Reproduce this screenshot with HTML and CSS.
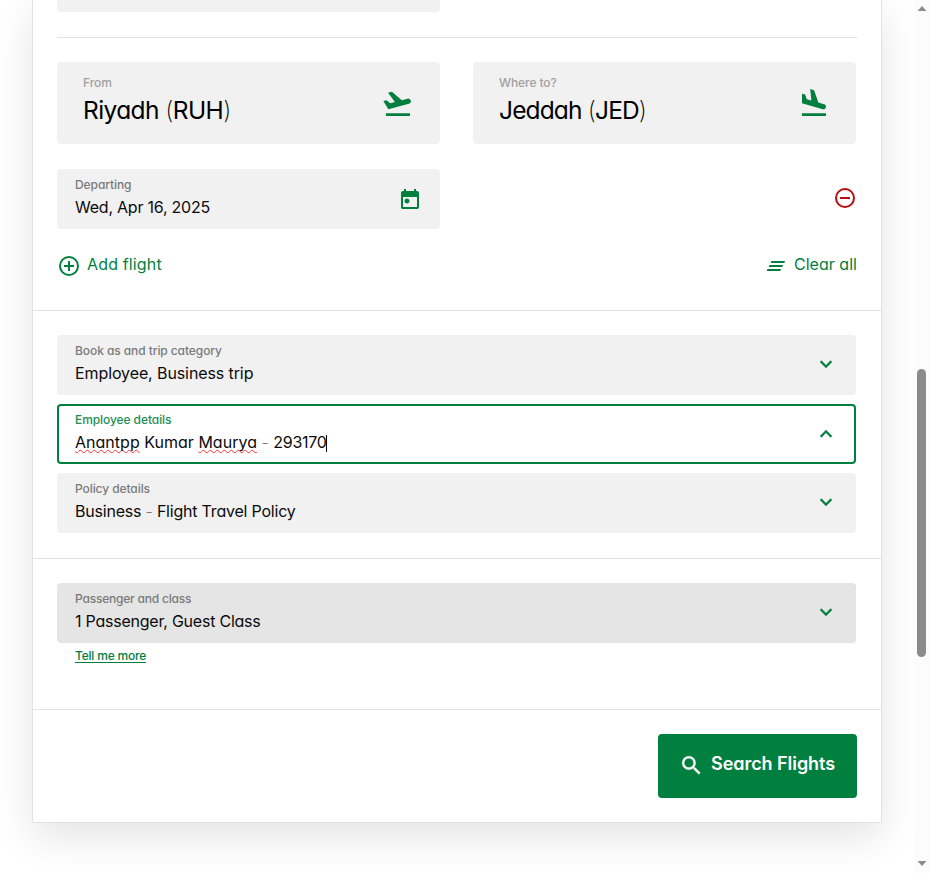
FILE: index.html
```html
<!DOCTYPE html>
<html lang="en">
<head>
<meta charset="utf-8">
<title>Search Flights</title>
<link rel="stylesheet" href="styles.css">
</head>
<body>
<div class="viewport">
  <main class="page">
    <form class="card">
      <section class="section itinerary">
        <div class="field-stub"></div>
        <hr class="rule">
        <div class="row">
          <div class="airport">
            <div class="airport-text"><span class="label faint">From</span><span class="city">Riyadh <i>(</i>RUH<i>)</i></span></div>
            <svg class="icon-lg" viewBox="0 -960 960 960"><path d="M120-120v-80h720v80H120Zm70-200L40-570l96-26 112 94 140-37-207-276 116-31 299 251 170-46q32-9 60.5 7.5T864-585q9 32-7.5 60.5T808-487L190-320Z"/></svg>
          </div>
          <div class="airport">
            <div class="airport-text"><span class="label faint">Where to?</span><span class="city city-to">Jeddah <i>(</i>JED<i>)</i></span></div>
            <svg class="icon-lg" viewBox="0 -960 960 960"><path d="M120-120v-80h720v80H120Zm622-202L120-499v-291l96 27 48 139 138 39-35-343 115 34 128 369 172 49q25 8 41.5 29t16.5 48q0 35-28.5 61.5T742-322Z"/></svg>
          </div>
        </div>
        <div class="row dates">
          <div class="field date">
            <div class="field-text"><span class="label">Departing</span><span class="value tight">Wed, Apr 16, 2025</span></div>
            <svg class="icon" viewBox="0 -960 960 960"><path d="M360-300q-42 0-71-29t-29-71q0-42 29-71t71-29q42 0 71 29t29 71q0 42-29 71t-71 29ZM200-80q-33 0-56.5-23.5T120-160v-560q0-33 23.5-56.5T200-800h40v-80h80v80h320v-80h80v80h40q33 0 56.5 23.5T840-720v560q0 33-23.5 56.5T760-80H200Zm0-80h560v-400H200v400Z"/></svg>
          </div>
          <svg class="icon remove" viewBox="0 0 24 24"><circle cx="12" cy="12" r="9"/><path d="M7 12h10"/></svg>
        </div>
        <div class="actions">
          <a class="action"><svg class="icon outline" viewBox="0 0 24 24"><circle cx="12" cy="12" r="9"/><path d="M7 12h10M12 7v10"/></svg><span class="action-text add">Add flight</span></a>
          <a class="action"><svg class="icon" viewBox="0 0 24 24"><path d="M7.4 7H21l-.7 2H6.7zM5.4 11H19l-.7 2H4.7zM3.4 15H17l-.7 2H2.7z"/></svg><span class="action-text">Clear all</span></a>
        </div>
      </section>
      <section class="section stack">
        <div class="field">
          <div class="field-text"><span class="label">Book as and trip category</span><span class="value">Employee, Business trip</span></div>
          <svg class="icon chevron" viewBox="0 0 24 24"><path d="M16.59 8.59 12 13.17 7.41 8.59 6 10l6 6 6-6z"/></svg>
        </div>
        <div class="field active">
          <div class="field-text"><span class="label">Employee details</span><span class="value name"><span class="misspelt">Anantpp</span> Kumar <span class="misspelt">Maurya</span> <i>-</i> <span class="number">293170</span><span class="caret"></span></span></div>
          <svg class="icon chevron" viewBox="0 0 24 24"><path d="m12 8-6 6 1.41 1.41L12 10.83l4.59 4.58L18 14z"/></svg>
        </div>
        <div class="field">
          <div class="field-text"><span class="label">Policy details</span><span class="value policy">Business <i>-</i> Flight Travel Policy</span></div>
          <svg class="icon chevron" viewBox="0 0 24 24"><path d="M16.59 8.59 12 13.17 7.41 8.59 6 10l6 6 6-6z"/></svg>
        </div>
      </section>
      <section class="section passengers">
        <div class="field hovered">
          <div class="field-text"><span class="label snug">Passenger and class</span><span class="value tight">1 Passenger, Guest Class</span></div>
          <svg class="icon chevron" viewBox="0 0 24 24"><path d="M16.59 8.59 12 13.17 7.41 8.59 6 10l6 6 6-6z"/></svg>
        </div>
        <a class="more">Tell me more</a>
      </section>
      <section class="section submit">
        <button class="search" type="button"><svg class="icon" viewBox="0 0 24 24"><path d="M15.5 14h-.79l-.28-.27A6.47 6.47 0 0 0 16 9.5 6.5 6.5 0 1 0 9.5 16c1.61 0 3.09-.59 4.23-1.57l.27.28v.79l5 4.99L20.49 19zm-6 0a4.5 4.5 0 1 1 0-9 4.5 4.5 0 0 1 0 9z"/></svg><span>Search Flights</span></button>
      </section>
    </form>
  </main>
  <aside class="scrollbar">
    <svg class="arrow" viewBox="0 0 10 5"><path d="M5 0l4.5 5h-9z"/></svg>
    <div class="thumb"></div>
    <svg class="arrow" viewBox="0 0 10 5"><path d="M.5 0h9L5 5z"/></svg>
  </aside>
</div>
</body>
</html>
```

FILE: styles.css
```css
* { box-sizing: border-box; }
body {
  margin: 0;
  font-family: Inter, "Liberation Sans", sans-serif;
  font-feature-settings: "cv11" 1;
  color: #0b0b0b;
  background: #fff;
}
.viewport { display: flex; height: 873px; overflow: hidden; }
.page { width: 914px; padding-left: 32px; overflow: hidden; }
.card {
  width: 850px;
  height: 823px;
  background: #fff;
  border: 1px solid #e1e1e1;
  border-top: 0;
  border-radius: 0 0 2px 2px;
  box-shadow: 0 14px 40px rgba(0, 0, 0, .11);
}
.section { padding: 24px 24px 25px; border-bottom: 1px solid #e1e1e1; }
.itinerary { height: 311px; padding-top: 0; }
.field-stub { width: 383px; height: 12px; background: #f1f1f1; border-radius: 0 0 4px 4px; }
.rule { height: 1px; margin: 25px 0 24px; border: 0; background: #e1e1e1; }
.row { display: flex; gap: 33px; }
.airport {
  display: flex;
  justify-content: space-between;
  width: 383px;
  height: 82px;
  padding: 14px 26px 0;
  background: #f1f1f1;
  border-radius: 4px;
}
.airport-text, .field-text { display: flex; flex-direction: column; }
.icon, .icon-lg { flex: none; width: 24px; height: 24px; fill: #007f3e; }
.icon-lg { width: 32px; height: 32px; margin-top: 12px; }
.label { font-size: 12px; line-height: 14px; letter-spacing: -.08px; font-weight: 450; color: #7a7a7a; white-space: nowrap; }
.snug { letter-spacing: -.2px; }
.faint { color: #a0a0a0; }
.city { font-size: 24.5px; line-height: 36px; margin-top: 2px; letter-spacing: -.6px; font-weight: 430; color: #000; white-space: nowrap; }
.city-to { letter-spacing: -.85px; }
.city i { font-style: normal; font-weight: 200; }
.field {
  display: flex;
  justify-content: space-between;
  height: 60px;
  width: 799px;
  padding: 9px 18px 0;
  background: #f1f1f1;
  border-radius: 4px;
}
.field .icon { margin-top: 8px; }
.field .chevron { stroke: #007f3e; stroke-width: .3; }
.field.active .chevron { margin-top: 9px; }
.value { font-size: 16px; line-height: 22px; margin-top: 4px; letter-spacing: -.1px; font-weight: 430; white-space: nowrap; }
.tight { letter-spacing: -.23px; }
.policy { letter-spacing: -.21px; }
.name { letter-spacing: .02px; }
.number { letter-spacing: -.3px; }
.value i { font-style: normal; font-weight: 300; color: #777; }
.dates { justify-content: space-between; margin-top: 25px; }
.date { width: 383px; }
.date .icon { margin-top: 9px; }
.remove, .outline { fill: none; stroke: #007f3e; stroke-width: 2; }
.remove { stroke: #b90e0e; margin-top: 17px; }
.actions { display: flex; justify-content: space-between; margin-top: 25px; }
.action { display: flex; gap: 6px; font-size: 16px; line-height: 20px; color: #007f3e; }
.action-text { font-weight: 420; letter-spacing: .03px; }
.add { letter-spacing: .15px; }
.stack { display: flex; flex-direction: column; gap: 9px; height: 248px; }
.active { padding: 7px 16px 0; background: #fff; border: 2px solid #007f3e; }
.active .label { color: #1c8e53; }
.misspelt { text-decoration: underline wavy #f33 1.3px; text-decoration-skip-ink: none; text-underline-offset: 1px; }
.caret { display: inline-block; width: 1px; height: 17px; background: #000; vertical-align: -4px; }
.hovered { background: #e5e5e5; }
.passengers { height: 151px; }
.more { display: inline-block; margin: 6px 0 0 18px; font-size: 12px; line-height: 14px; letter-spacing: -.2px; font-weight: 450; color: #007f3e; text-decoration: underline; text-underline-offset: 2px; }
.submit { display: flex; justify-content: flex-end; border: 0; }
.search {
  display: flex;
  gap: 7px;
  width: 199px;
  height: 64px;
  padding: 18px 21px;
  border: 0;
  border-radius: 4px;
  background: #007f3e;
  color: #fff;
  font: 600 18px/24px Inter, "Liberation Sans", sans-serif;
  font-feature-settings: "cv11" 1;
  letter-spacing: -.05px;
  white-space: nowrap;
}
.search .icon { width: 25px; height: 25px; fill: #fff; stroke: #fff; stroke-width: .3; margin-top: 1px; }
.scrollbar {
  display: flex;
  flex-direction: column;
  align-items: center;
  justify-content: space-between;
  width: 15px;
  padding: 6px 0 7px;
  background: #fcfcfc;
}
.arrow { width: 10px; height: 5px; fill: #8b8b8b; }
.thumb { width: 9px; height: 288px; margin-top: 153px; background: #8b8b8b; border-radius: 5px; }
```
